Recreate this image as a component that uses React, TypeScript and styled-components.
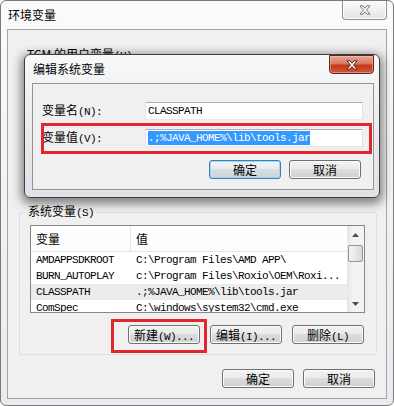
import styled, { createGlobalStyle } from "styled-components";

const GlobalStyle = createGlobalStyle`
  html, body {
    margin: 0;
    padding: 0;
    background: #fff;
  }
  body {
    font-family: "Noto Sans CJK SC", "Liberation Sans", sans-serif;
    font-size: 12px;
    color: #000;
    overflow: hidden;
  }
  * {
    box-sizing: border-box;
  }
`;

const Window = styled.div`
  position: relative;
  width: 394px;
  height: 406px;
  border: 1px solid #7b7b7b;
  border-radius: 6px;
  background: linear-gradient(180deg, #fbfbfc 0%, #f1f2f4 50%, #e9ebee 100%);
  padding: 0 6px 6px;
  display: flex;
  flex-direction: column;
`;

const TitleBar = styled.div`
  height: 28px;
  flex-shrink: 0;
  display: flex;
  justify-content: space-between;
  align-items: flex-start;
`;

const Title = styled.div`
  padding: 6px 0 0 1px;
  line-height: 16px;
  font-size: 12px;
`;

const CloseButton = styled.div<{ $active?: boolean }>`
  width: 45px;
  height: 19px;
  border: 1px solid ${(p) => (p.$active ? "#5e2418" : "#8d8f92")};
  border-top: ${(p) => (p.$active ? "1px solid #5e2418" : "none")};
  border-radius: 0 0 4px 4px;
  background: ${(p) =>
    p.$active
      ? "linear-gradient(180deg, #e9a99a 0%, #d8775f 45%, #c2391f 55%, #d2583c 100%)"
      : "linear-gradient(180deg, #fafafa 0%, #eef0f2 50%, #e2e5e9 100%)"};
  box-shadow: inset 0 0 0 1px ${(p) => (p.$active ? "rgba(255,200,180,0.5)" : "#ffffff")};
  display: flex;
  align-items: center;
  justify-content: center;
`;

const Client = styled.div`
  flex: 1;
  border: 1px solid #a3a3a3;
  background: #f0f0f0;
  display: flex;
  flex-direction: column;
  padding: 0 9px 0 11px;
`;

const UserGroup = styled.div`
  height: 173px;
  flex-shrink: 0;
  padding: 17px 0 0 8px;
  line-height: 14px;
`;

const SysGroup = styled.fieldset`
  margin: 0;
  width: 358px;
  border: 1px solid #d5dfe5;
  border-radius: 3px;
  padding: 4px 11px 10px 10px;
`;

const Legend = styled.legend`
  padding: 0 2px;
  margin-left: -4px;
  line-height: 16px;
  font-size: 12px;
`;

const Key = styled.span`
  font-family: "Liberation Mono", monospace;
  font-size: 11px;
  letter-spacing: -0.6px;
`;

const ListView = styled.div`
  width: 335px;
  height: 88px;
  border: 1px solid #828790;
  background: #fff;
  display: flex;
  overflow: hidden;
`;

const Table = styled.div`
  flex: 1;
  overflow: hidden;
`;

const HeaderRow = styled.div`
  height: 26px;
  display: grid;
  grid-template-columns: 100px 1fr;
  border-bottom: 1px solid #e5e5e5;
  background: linear-gradient(180deg, #ffffff 0%, #fdfdfd 100%);
`;

const HeaderCell = styled.div`
  padding-left: 5px;
  line-height: 25px;
  font-size: 12px;
  &:first-child {
    border-right: 1px solid #e5e5e5;
  }
`;

const Row = styled.div<{ $selected?: boolean }>`
  height: 16px;
  display: grid;
  grid-template-columns: 100px 1fr;
  background: ${(p) => (p.$selected ? "#ececec" : "transparent")};
`;

const Cell = styled.div`
  padding-left: 5px;
  line-height: 16px;
  font-family: "Liberation Mono", monospace;
  font-size: 11px;
  letter-spacing: -0.6px;
  white-space: nowrap;
  overflow: hidden;
`;

const ScrollBar = styled.div`
  width: 17px;
  display: flex;
  flex-direction: column;
  align-items: center;
  background: linear-gradient(90deg, #e6e6e6 0%, #f4f4f4 40%, #f4f4f4 100%);
`;

const Arrow = styled.div`
  height: 17px;
  width: 17px;
  display: flex;
  align-items: center;
  justify-content: center;
`;

const Thumb = styled.div`
  width: 15px;
  height: 17px;
  margin-top: 2px;
  border: 1px solid #959595;
  border-radius: 2px;
  background: linear-gradient(90deg, #f3f3f3 0%, #e8e8e8 50%, #d6d6d6 100%);
`;

const Spacer = styled.div`
  flex: 1;
`;

const ButtonRow = styled.div<{ $gap: number; $top: number; $right: number }>`
  display: flex;
  justify-content: flex-end;
  gap: ${(p) => p.$gap}px;
  margin-top: ${(p) => p.$top}px;
  padding-right: ${(p) => p.$right}px;
`;

const Button = styled.button<{ $default?: boolean }>`
  width: 72px;
  height: 19px;
  padding: 0;
  font-family: "Noto Sans CJK SC", "Liberation Sans", sans-serif;
  font-size: 12px;
  line-height: 17px;
  color: #000;
  border: 1px solid ${(p) => (p.$default ? "#3c7fb1" : "#707070")};
  border-radius: 3px;
  background: ${(p) =>
    p.$default
      ? "linear-gradient(180deg, #f1f5f8 0%, #e6ecf0 45%, #d7dfe4 50%, #c9d2d8 100%)"
      : "linear-gradient(180deg, #f2f2f2 0%, #ebebeb 45%, #dddddd 50%, #cfcfcf 100%)"};
  box-shadow: inset 0 0 0 1px ${(p) => (p.$default ? "#9fd6f5" : "#fcfcfc")};
  white-space: nowrap;
`;

const Marked = styled.span`
  position: relative;
  display: inline-flex;
  &::after {
    content: "";
    position: absolute;
    top: -6px;
    bottom: -9px;
    left: -17px;
    right: -7px;
    border: 3px solid #e3262d;
    pointer-events: none;
  }
`;

const Dialog = styled.div`
  position: absolute;
  left: 23px;
  top: 53px;
  width: 356px;
  height: 144px;
  border: 1px solid #3f3f3f;
  border-radius: 6px;
  background: linear-gradient(180deg, #f8f9fa 0%, #eceef1 40%, #dfe2e6 100%);
  box-shadow: 0 3px 10px 3px rgba(0, 0, 0, 0.45);
  padding: 0 5px 7px 7px;
  display: flex;
  flex-direction: column;
`;

const DialogClient = styled.div`
  flex: 1;
  border: 1px solid #959595;
  background: #f0f0f0;
  padding: 18px 10px 0 9px;
  display: flex;
  flex-direction: column;
`;

const FieldRow = styled.div<{ $marked?: boolean }>`
  position: relative;
  height: 18px;
  display: flex;
  align-items: center;
  margin-top: ${(p) => (p.$marked ? 9 : 0)}px;
  &::after {
    content: "";
    display: ${(p) => (p.$marked ? "block" : "none")};
    position: absolute;
    top: -6px;
    bottom: -7px;
    left: -1px;
    right: -9px;
    border: 3px solid #e1262e;
    pointer-events: none;
  }
`;

const Label = styled.div`
  width: 103px;
  line-height: 16px;
  white-space: nowrap;
`;

const Input = styled.div`
  flex: 1;
  height: 18px;
  border: 1px solid;
  border-color: #abadb3 #e2e3ea #e3e9ef #e2e3ea;
  background: #fff;
  padding: 0 2px;
  display: flex;
  align-items: center;
  font-family: "Liberation Mono", monospace;
  font-size: 11px;
  letter-spacing: -0.6px;
  white-space: nowrap;
`;

const Selected = styled.span`
  background: #3399ff;
  color: #fff;
  line-height: 14px;
`;

const CloseX = ({ dark }: { dark?: boolean }) => (
  <svg width="12" height="10" viewBox="0 0 12 10">
    <path
      d="M1 0.8 h3 l2 2.5 l2 -2.5 h3 l-3.5 4.2 l3.5 4.2 h-3 l-2 -2.5 l-2 2.5 h-3 l3.5 -4.2 z"
      fill="#fff"
      stroke={dark ? "#4a1a10" : "#6a6a6a"}
      strokeWidth="0.9"
      strokeLinejoin="round"
    />
  </svg>
);

const rows = [
  { name: "AMDAPPSDKROOT", value: "C:\\Program Files\\AMD APP\\" },
  { name: "BURN_AUTOPLAY", value: "c:\\Program Files\\Roxio\\OEM\\Roxi..." },
  { name: "CLASSPATH", value: ".;%JAVA_HOME%\\lib\\tools.jar", selected: true },
  { name: "ComSpec", value: "C:\\windows\\system32\\cmd.exe" },
];

export default function App() {
  return (
    <>
      <GlobalStyle />
      <Window>
        <TitleBar>
          <Title>环境变量</Title>
          <CloseButton>
            <CloseX />
          </CloseButton>
        </TitleBar>
        <Client>
          <UserGroup>
            TCM 的用户变量<Key>(U)</Key>
          </UserGroup>
          <SysGroup>
            <Legend>
              系统变量<Key>(S)</Key>
            </Legend>
            <ListView>
              <Table>
                <HeaderRow>
                  <HeaderCell>变量</HeaderCell>
                  <HeaderCell>值</HeaderCell>
                </HeaderRow>
                {rows.map((r) => (
                  <Row key={r.name} $selected={r.selected}>
                    <Cell>{r.name}</Cell>
                    <Cell>{r.value}</Cell>
                  </Row>
                ))}
              </Table>
              <ScrollBar>
                <Arrow>
                  <svg width="7" height="4" viewBox="0 0 7 4">
                    <path d="M0 4 L3.5 0 L7 4 z" fill="#4d4d4d" />
                  </svg>
                </Arrow>
                <Thumb />
                <Spacer />
                <Arrow>
                  <svg width="7" height="4" viewBox="0 0 7 4">
                    <path d="M0 0 L7 0 L3.5 4 z" fill="#4d4d4d" />
                  </svg>
                </Arrow>
              </ScrollBar>
            </ListView>
            <ButtonRow $gap={10} $top={12} $right={1}>
              <Marked>
                <Button>
                  新建<Key>(W)...</Key>
                </Button>
              </Marked>
              <Button>
                编辑<Key>(I)...</Key>
              </Button>
              <Button>
                删除<Key>(L)</Key>
              </Button>
            </ButtonRow>
          </SysGroup>
          <ButtonRow $gap={9} $top={14} $right={2}>
            <Button>确定</Button>
            <Button>取消</Button>
          </ButtonRow>
        </Client>

        <Dialog>
          <TitleBar>
            <Title>编辑系统变量</Title>
            <CloseButton $active>
              <CloseX dark />
            </CloseButton>
          </TitleBar>
          <DialogClient>
            <FieldRow>
              <Label>
                变量名<Key>(N):</Key>
              </Label>
              <Input>CLASSPATH</Input>
            </FieldRow>
            <FieldRow $marked>
              <Label>
                变量值<Key>(V):</Key>
              </Label>
              <Input>
                <Selected>.;%JAVA_HOME%\lib\tools.jar</Selected>
              </Input>
            </FieldRow>
            <ButtonRow $gap={8} $top={13} $right={2}>
              <Button $default>确定</Button>
              <Button>取消</Button>
            </ButtonRow>
          </DialogClient>
        </Dialog>
      </Window>
    </>
  );
}
